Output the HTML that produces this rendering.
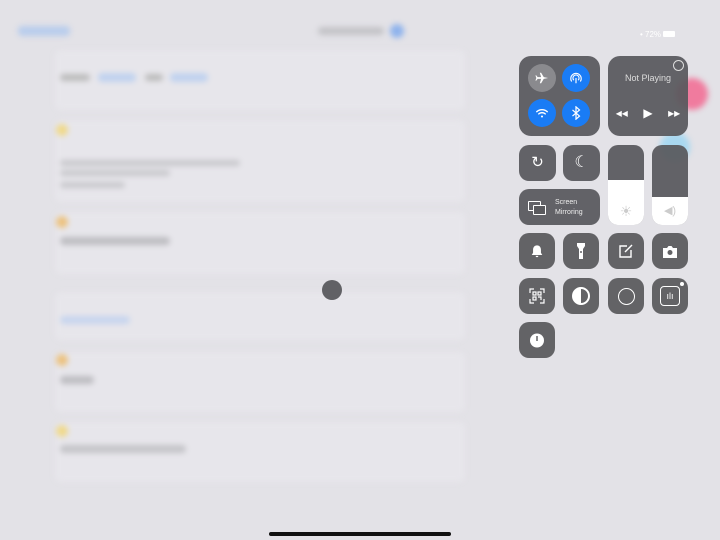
<!DOCTYPE html>
<html><head><style>
body{margin:0;width:720px;height:540px;overflow:hidden;background:#e3e2e7;font-family:"Liberation Sans",sans-serif;position:relative}
.bg{position:absolute;inset:0;filter:blur(3px)}
.card{position:absolute;left:55px;width:410px;background:#e7e6eb;border-radius:6px}
.b{position:absolute;border-radius:4px}
.t{position:absolute;background:rgba(88,88,92,.93);border-radius:12px}
.c{position:absolute;width:36px;height:36px;background:#636366;border-radius:10px;display:flex;align-items:center;justify-content:center}
.r{position:absolute;width:28px;height:28px;border-radius:50%;display:flex;align-items:center;justify-content:center}
svg{display:block}
</style></head><body>
<div class="bg">
<div class="b" style="left:18px;top:26px;width:52px;height:10px;background:#b9cdec"></div>
<div class="b" style="left:318px;top:27px;width:66px;height:8px;background:#c3c3c7"></div>
<div class="b" style="left:390px;top:24px;width:14px;height:14px;border-radius:50%;background:#8fb3ec"></div>
<div class="card" style="top:50px;height:60px"></div>
<div class="b" style="left:60px;top:74px;width:30px;height:7px;background:#bbb"></div>
<div class="b" style="left:98px;top:73px;width:38px;height:9px;background:#c0d2ef"></div>
<div class="b" style="left:145px;top:74px;width:18px;height:7px;background:#bbb"></div>
<div class="b" style="left:170px;top:73px;width:38px;height:9px;background:#c0d2ef"></div>
<div class="card" style="top:120px;height:82px"></div>
<div class="b" style="left:56px;top:124px;width:12px;height:12px;border-radius:50%;background:#f0d98a"></div>
<div class="b" style="left:60px;top:160px;width:180px;height:6px;background:#c8c8cc"></div>
<div class="b" style="left:60px;top:170px;width:110px;height:6px;background:#c8c8cc"></div>
<div class="b" style="left:60px;top:182px;width:65px;height:6px;background:#c8c8cc"></div>
<div class="card" style="top:212px;height:62px"></div>
<div class="b" style="left:56px;top:216px;width:12px;height:12px;border-radius:50%;background:#ecc27f"></div>
<div class="b" style="left:60px;top:237px;width:110px;height:8px;background:#bdbdc1"></div>
<div class="card" style="top:292px;height:48px"></div>
<div class="b" style="left:60px;top:316px;width:70px;height:8px;background:#c7d5ee"></div>
<div class="card" style="top:352px;height:60px"></div>
<div class="b" style="left:56px;top:354px;width:12px;height:12px;border-radius:50%;background:#ecc27f"></div>
<div class="b" style="left:60px;top:376px;width:34px;height:8px;background:#bdbdc1"></div>
<div class="card" style="top:422px;height:60px"></div>
<div class="b" style="left:56px;top:425px;width:12px;height:12px;border-radius:50%;background:#f0d98a"></div>
<div class="b" style="left:60px;top:445px;width:126px;height:8px;background:#c4c4c8"></div>
<div class="b" style="left:676px;top:78px;width:32px;height:32px;border-radius:50%;background:#f07b9e"></div>
<div class="b" style="left:660px;top:132px;width:30px;height:30px;border-radius:50%;background:#a8d8f0"></div>
</div>
<div style="position:absolute;left:322px;top:280px;width:20px;height:20px;border-radius:50%;background:#616165"></div>
<div style="position:absolute;left:640px;top:30px;font-size:8px;color:#fff">&#x2022; 72% <span style="display:inline-block;width:12px;height:6px;background:#fff;border-radius:1px"></span></div>
<div class="t" style="left:519px;top:56px;width:81px;height:80px"></div>
<div class="r" style="left:528px;top:64px;background:#8a8a8e"><svg width="14" height="14" viewBox="0 0 16 16" style="transform:scaleX(-1)"><path d="M1 8l5-1 3-5h1.5l-1.5 5h4l1.5-2h1l-1 3 1 3h-1l-1.5-2h-4l1.5 5H9L6 9z" fill="#fff"/></svg></div>
<div class="r" style="left:562px;top:64px;background:#1a7cf5"><svg width="14" height="14" viewBox="0 0 16 16" fill="none" stroke="#fff" stroke-width="1.3"><path d="M3 12A6 6 0 1 1 13 12M5.5 10.5a3.5 3.5 0 1 1 5 0M8 8v6"/></svg></div>
<div class="r" style="left:528px;top:99px;background:#1a7cf5"><svg width="14" height="14" viewBox="0 0 16 16" fill="none" stroke="#fff" stroke-width="1.6" stroke-linecap="round"><path d="M2 6.5a9 9 0 0 1 12 0M4.3 9a5.5 5.5 0 0 1 7.4 0"/><circle cx="8" cy="12" r="1.2" fill="#fff" stroke="none"/></svg></div>
<div class="r" style="left:562px;top:99px;background:#1a7cf5"><svg width="12" height="14" viewBox="0 0 12 16" fill="none" stroke="#fff" stroke-width="1.4"><path d="M2 4.5l8 7-4 3.5V1l4 3.5-8 7"/></svg></div>
<div class="t" style="left:608px;top:56px;width:80px;height:80px;color:#ddd;font-size:9px;text-align:center"><div style="position:absolute;right:4px;top:4px;width:9px;height:9px;border:1px solid #ddd;border-radius:50%"></div><div style="margin-top:17px">Not Playing</div><div style="margin-top:23px;font-size:12px;color:#fff;display:flex;justify-content:space-around">◂◂<span>▶</span>▸▸</div></div>
<div class="t" style="left:519px;top:145px;width:37px;height:36px;border-radius:10px;color:#fff;text-align:center;line-height:36px;font-size:15px">↻</div>
<div class="t" style="left:563px;top:145px;width:37px;height:36px;border-radius:10px;color:#fff;text-align:center;line-height:36px;font-size:16px">☾</div>
<div class="t" style="left:608px;top:145px;width:36px;height:80px;border-radius:10px;overflow:hidden"><div style="position:absolute;bottom:0;width:100%;height:45px;background:#fff;color:#ccc;text-align:center;line-height:62px;font-size:14px">☀</div></div>
<div class="t" style="left:652px;top:145px;width:36px;height:80px;border-radius:10px;overflow:hidden"><div style="position:absolute;bottom:0;width:100%;height:28px;background:#fff;color:#ccc;text-align:center;line-height:28px;font-size:11px">◀)</div></div>
<div class="t" style="left:519px;top:189px;width:81px;height:36px;border-radius:10px;color:#eee;font-size:7px"><div style="position:absolute;left:9px;top:12px;width:11px;height:8px;border:1px solid #fff;border-radius:1px"></div><div style="position:absolute;left:14px;top:16px;width:11px;height:8px;border:1px solid #fff;border-radius:1px;background:#5a5a5e"></div><div style="position:absolute;left:36px;top:9px;line-height:10px">Screen<br>Mirroring</div></div>
<div class="c" style="left:519px;top:233px"><svg width="14" height="14" viewBox="0 0 16 16"><path d="M8 1.5c-3 0-4.5 2.5-4.5 5V10L2 12.5h12L12.5 10V6.5C12.5 4 11 1.5 8 1.5zM6.5 13.5h3a1.5 1.5 0 0 1-3 0z" fill="#fff"/></svg></div>
<div class="c" style="left:563px;top:233px"><svg width="10" height="18" viewBox="0 0 10 18"><path d="M1 1h8v3L7 7v10H3V7L1 4z" fill="#fff"/><circle cx="5" cy="10" r="1" fill="#636366"/></svg></div>
<div class="c" style="left:608px;top:233px"><svg width="16" height="16" viewBox="0 0 16 16" fill="none" stroke="#fff" stroke-width="1.4"><path d="M9 3H2v11h11V7"/><path d="M7 9l7-7"/></svg></div>
<div class="c" style="left:652px;top:233px"><svg width="16" height="13" viewBox="0 0 16 13"><path d="M1 3h4l1.5-2h3L11 3h4v10H1z" fill="#fff"/><circle cx="8" cy="7.5" r="2.5" fill="#636366"/></svg></div>
<div class="c" style="left:519px;top:278px"><svg width="16" height="16" viewBox="0 0 16 16" fill="none" stroke="#fff" stroke-width="1.2"><path d="M1 5V1h4M11 1h4v4M15 11v4h-4M5 15H1v-4"/><rect x="4" y="4" width="3" height="3"/><rect x="9" y="4" width="3" height="3"/><rect x="4" y="9" width="3" height="3"/><path d="M9 9h3v3"/></svg></div>
<div class="c" style="left:563px;top:278px"><div style="width:14px;height:14px;border:2px solid #fff;border-radius:50%;background:linear-gradient(90deg,#fff 50%,transparent 50%)"></div></div>
<div class="c" style="left:608px;top:278px"><div style="width:15px;height:15px;border:1.5px solid #fff;border-radius:50%"></div></div>
<div class="c" style="left:652px;top:278px"><div style="position:absolute;right:4px;top:4px;width:4px;height:4px;background:#fff;border-radius:50%"></div><div style="width:18px;height:18px;border:1.5px solid #fff;border-radius:4px;color:#fff;font-size:9px;text-align:center;line-height:18px">ılı</div></div>
<div class="c" style="left:519px;top:322px"><svg width="16" height="16" viewBox="0 0 16 16"><circle cx="8" cy="8.5" r="7" fill="#fff"/><path d="M8 4v5" stroke="#636366" stroke-width="1.5"/></svg></div>
<div style="position:absolute;left:269px;top:532px;width:182px;height:4px;border-radius:2px;background:#111"></div>
</body></html>
